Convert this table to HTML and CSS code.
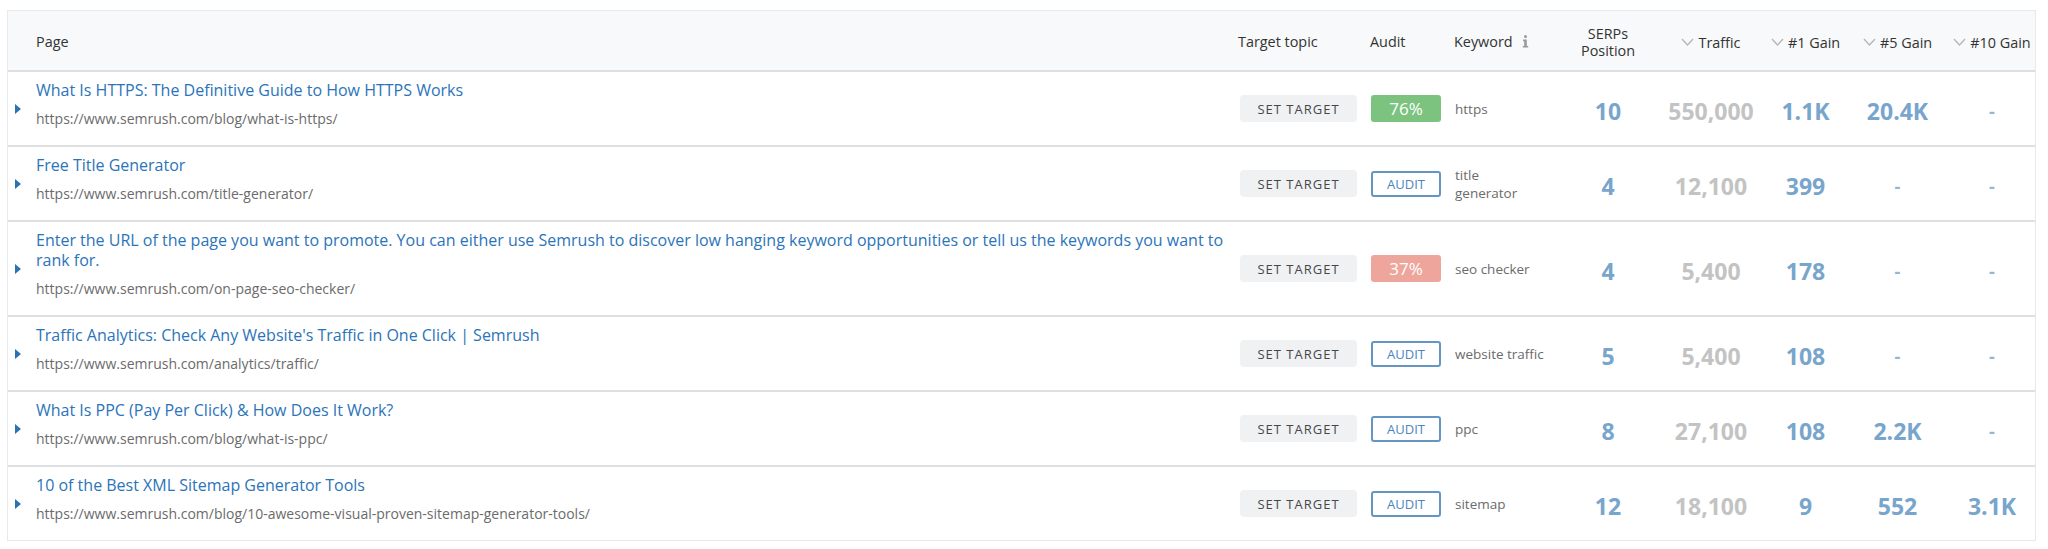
FILE: index.html
```html
<!DOCTYPE html>
<html lang="en">
<head>
<meta charset="utf-8">
<title>Pages</title>
<link rel="stylesheet" href="styles.css">
</head>
<body>
<div class="table">
  <div class="row head">
    <div class="cell c-page">Page</div>
    <div class="cell c-target">Target topic</div>
    <div class="cell c-audit">Audit</div>
    <div class="cell c-kw">Keyword
      <svg class="info" width="7" height="13" viewBox="0 0 7 13"><circle cx="3.5" cy="1.6" r="1.5" fill="#9a9a9a"/><path d="M1 4.6h3.8v6.4H6.2V12.6H0.8V11H2.2V6.2H1z" fill="#9a9a9a"/></svg>
    </div>
    <div class="cell c-num">SERPs<br>Position</div>
    <div class="cell c-num"><span class="sort"><svg width="13" height="8" viewBox="0 0 13 8"><path d="M1 1l5.5 6L12 1" fill="none" stroke="#b5b5b5" stroke-width="1.3"/></svg>Traffic</span></div>
    <div class="cell c-num"><span class="sort"><svg width="13" height="8" viewBox="0 0 13 8"><path d="M1 1l5.5 6L12 1" fill="none" stroke="#b5b5b5" stroke-width="1.3"/></svg>#1 Gain</span></div>
    <div class="cell c-num"><span class="sort"><svg width="13" height="8" viewBox="0 0 13 8"><path d="M1 1l5.5 6L12 1" fill="none" stroke="#b5b5b5" stroke-width="1.3"/></svg>#5 Gain</span></div>
    <div class="cell c-num"><span class="sort"><svg width="13" height="8" viewBox="0 0 13 8"><path d="M1 1l5.5 6L12 1" fill="none" stroke="#b5b5b5" stroke-width="1.3"/></svg>#10 Gain</span></div>
  </div>

  <div class="row">
    <div class="cell c-page"><span class="caret"></span><div class="ptext"><a class="ptitle">What Is HTTPS: The Definitive Guide to How HTTPS Works</a><div class="purl">https://www.semrush.com/blog/what-is-https/</div></div></div>
    <div class="cell c-target"><span class="btn-target">SET TARGET</span></div>
    <div class="cell c-audit"><span class="badge good">76%</span></div>
    <div class="cell c-kw"><span class="kw">https</span></div>
    <div class="cell c-num"><span class="n blue">10</span></div>
    <div class="cell c-num"><span class="n gray">550,000</span></div>
    <div class="cell c-num"><span class="n blue">1.1K</span></div>
    <div class="cell c-num"><span class="n blue">20.4K</span></div>
    <div class="cell c-num"><span class="n dash">-</span></div>
  </div>

  <div class="row">
    <div class="cell c-page"><span class="caret"></span><div class="ptext"><a class="ptitle">Free Title Generator</a><div class="purl">https://www.semrush.com/title-generator/</div></div></div>
    <div class="cell c-target"><span class="btn-target">SET TARGET</span></div>
    <div class="cell c-audit"><span class="btn-audit">AUDIT</span></div>
    <div class="cell c-kw"><span class="kw">title<br>generator</span></div>
    <div class="cell c-num"><span class="n blue">4</span></div>
    <div class="cell c-num"><span class="n gray">12,100</span></div>
    <div class="cell c-num"><span class="n blue">399</span></div>
    <div class="cell c-num"><span class="n dash">-</span></div>
    <div class="cell c-num"><span class="n dash">-</span></div>
  </div>

  <div class="row">
    <div class="cell c-page"><span class="caret"></span><div class="ptext"><a class="ptitle">Enter the URL of the page you want to promote. You can either use Semrush to discover low hanging keyword opportunities or tell us the keywords you want to rank for.</a><div class="purl">https://www.semrush.com/on-page-seo-checker/</div></div></div>
    <div class="cell c-target"><span class="btn-target">SET TARGET</span></div>
    <div class="cell c-audit"><span class="badge bad">37%</span></div>
    <div class="cell c-kw"><span class="kw">seo checker</span></div>
    <div class="cell c-num"><span class="n blue">4</span></div>
    <div class="cell c-num"><span class="n gray">5,400</span></div>
    <div class="cell c-num"><span class="n blue">178</span></div>
    <div class="cell c-num"><span class="n dash">-</span></div>
    <div class="cell c-num"><span class="n dash">-</span></div>
  </div>

  <div class="row">
    <div class="cell c-page"><span class="caret"></span><div class="ptext"><a class="ptitle">Traffic Analytics: Check Any Website's Traffic in One Click | Semrush</a><div class="purl">https://www.semrush.com/analytics/traffic/</div></div></div>
    <div class="cell c-target"><span class="btn-target">SET TARGET</span></div>
    <div class="cell c-audit"><span class="btn-audit">AUDIT</span></div>
    <div class="cell c-kw"><span class="kw">website traffic</span></div>
    <div class="cell c-num"><span class="n blue">5</span></div>
    <div class="cell c-num"><span class="n gray">5,400</span></div>
    <div class="cell c-num"><span class="n blue">108</span></div>
    <div class="cell c-num"><span class="n dash">-</span></div>
    <div class="cell c-num"><span class="n dash">-</span></div>
  </div>

  <div class="row">
    <div class="cell c-page"><span class="caret"></span><div class="ptext"><a class="ptitle">What Is PPC (Pay Per Click) &amp; How Does It Work?</a><div class="purl">https://www.semrush.com/blog/what-is-ppc/</div></div></div>
    <div class="cell c-target"><span class="btn-target">SET TARGET</span></div>
    <div class="cell c-audit"><span class="btn-audit">AUDIT</span></div>
    <div class="cell c-kw"><span class="kw">ppc</span></div>
    <div class="cell c-num"><span class="n blue">8</span></div>
    <div class="cell c-num"><span class="n gray">27,100</span></div>
    <div class="cell c-num"><span class="n blue">108</span></div>
    <div class="cell c-num"><span class="n blue">2.2K</span></div>
    <div class="cell c-num"><span class="n dash">-</span></div>
  </div>

  <div class="row">
    <div class="cell c-page"><span class="caret"></span><div class="ptext"><a class="ptitle">10 of the Best XML Sitemap Generator Tools</a><div class="purl">https://www.semrush.com/blog/10-awesome-visual-proven-sitemap-generator-tools/</div></div></div>
    <div class="cell c-target"><span class="btn-target">SET TARGET</span></div>
    <div class="cell c-audit"><span class="btn-audit">AUDIT</span></div>
    <div class="cell c-kw"><span class="kw">sitemap</span></div>
    <div class="cell c-num"><span class="n blue">12</span></div>
    <div class="cell c-num"><span class="n gray">18,100</span></div>
    <div class="cell c-num"><span class="n blue">9</span></div>
    <div class="cell c-num"><span class="n blue">552</span></div>
    <div class="cell c-num"><span class="n blue">3.1K</span></div>
  </div>
</div>
</body>
</html>
```

FILE: styles.css
```css
* { box-sizing: border-box; }
html, body { margin: 0; padding: 0; background: #ffffff; }
body {
  font-family: "Open Sans", "Noto Sans", "Liberation Sans", sans-serif;
  color: #333333;
  padding: 10px 12px 0 7px;
}
.table {
  width: 2029px;
  border: 1px solid #e8e9eb;
  background: #ffffff;
}
.row {
  display: grid;
  grid-template-columns: 1222px 132px 85px 113px 96px 110px 79px 105px 84px;
  align-items: center;
  border-bottom: 2px solid #dedfe1;
}
.row:last-child { border-bottom: none; }
.row.head {
  background: #f8f9fa;
  height: 61px;
  font-size: 14.4px;
  line-height: 17px;
  color: #333333;
  padding-top: 2px;
}
.cell { min-width: 0; }
.head .c-page { padding: 0 0 0 28px; }
.head .c-target { padding-left: 8px; }
.head .c-audit { padding-left: 8px; }
.head .c-kw { padding-left: 7px; display: flex; align-items: center; }
.info { margin-left: 9px; }
.c-num { text-align: center; }
.sort { display: inline-flex; align-items: center; }
.sort svg { margin-right: 4px; }

.c-page {
  display: flex;
  align-items: center;
  padding: 0 0 0 7px;
}
.caret {
  width: 0; height: 0;
  border-top: 5px solid transparent;
  border-bottom: 5px solid transparent;
  border-left: 6px solid #2b72b5;
  margin-right: 15px;
  flex: none;
}
.ptext {
  padding: 8px 0 17px;
}
.ptitle {
  display: block;
  font-size: 16px;
  line-height: 20px;
  color: #2b74b9;
}
.purl {
  margin-top: 9px;
  font-size: 14px;
  line-height: 19px;
  color: #6b6b6b;
}
.c-target { padding-left: 10px; }
.btn-target {
  display: inline-flex;
  align-items: center;
  justify-content: center;
  width: 117px;
  height: 27px;
  background: #f0f1f3;
  border-radius: 4px;
  font-size: 13px;
  letter-spacing: 1px;
  color: #474747;
}
.c-audit { padding-left: 9px; }
.badge, .btn-audit {
  display: inline-flex;
  align-items: center;
  justify-content: center;
  width: 70px;
  height: 27px;
  border-radius: 3px;
}
.badge { color: #ffffff; font-size: 17px; }
.badge.good { background: #7cc380; }
.badge.bad { background: #eea69c; }
.btn-audit {
  border: 2px solid #6596c3;
  color: #4a86bd;
  font-size: 13px;
  height: 26px;
}
.c-kw { padding-left: 8px; }
.kw {
  display: block;
  font-size: 13.5px;
  line-height: 18px;
  color: #6b6b6b;
}
.n {
  display: inline-block;
  margin-top: 5px;
  font-size: 23px;
  font-weight: 700;
  line-height: 28px;
}
.n.blue { color: #78a5cc; }
.n.gray { color: #c3c3c3; }
.n.dash { color: #93b6d6; font-size: 18px; }
```
